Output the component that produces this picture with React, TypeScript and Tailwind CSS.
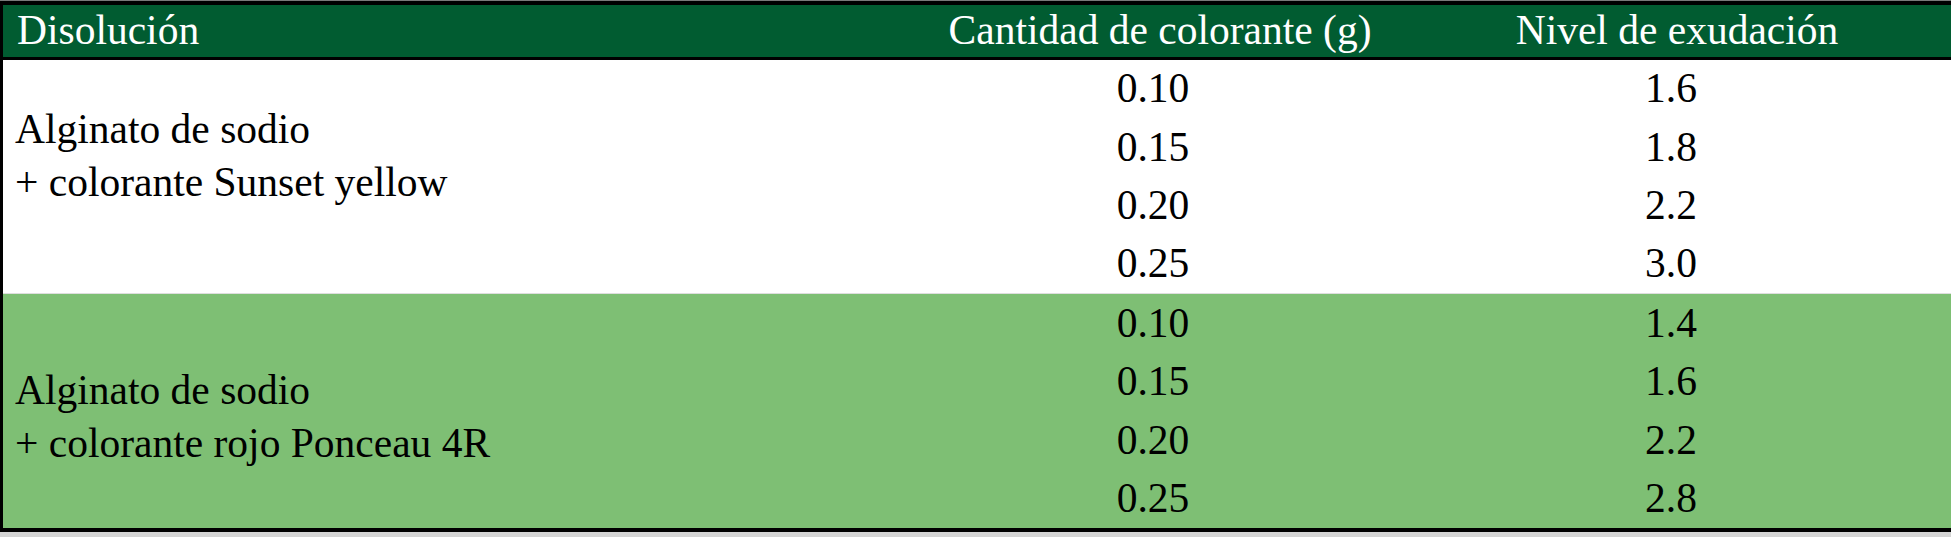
const rows1 = [
  ["0.10", "1.6"],
  ["0.15", "1.8"],
  ["0.20", "2.2"],
  ["0.25", "3.0"],
];

const rows2 = [
  ["0.10", "1.4"],
  ["0.15", "1.6"],
  ["0.20", "2.2"],
  ["0.25", "2.8"],
];

function Values({ rows, col }: { rows: string[][]; col: number }) {
  return (
    <div className="grid grid-rows-4">
      {rows.map((r, i) => (
        <div key={i} className="flex items-center justify-center">
          {r[col]}
        </div>
      ))}
    </div>
  );
}

export default function App() {
  return (
    <div className="w-[1951px] h-[537px] bg-[#d4d4d4] font-serif text-[41.5px] leading-none">
      <div className="h-px bg-[#7a7a7a]" />
      <div className="border-t-4 border-b-4 border-l-[3px] border-black font-[Liberation_Serif]">
        <div className="h-[55px] bg-[#015c31] text-white grid grid-cols-[912px_476px_1fr] border-b-[3px] border-black">
          <div className="flex items-center pl-[14px]">Disolución</div>
          <div className="flex items-center justify-center pl-[14px]">Cantidad de colorante (g)</div>
          <div className="flex items-center justify-center pl-[12px]">Nivel de exudación</div>
        </div>
        <div className="h-[233px] bg-white text-black grid grid-cols-[912px_476px_1fr]">
          <div className="flex flex-col justify-center pl-[12px] pb-[42px] leading-[53px]">
            <span>Alginato de sodio</span>
            <span>+ colorante Sunset yellow</span>
          </div>
          <Values rows={rows1} col={0} />
          <Values rows={rows1} col={1} />
        </div>
        <div className="h-px bg-[#dedede]" />
        <div className="h-[234px] bg-[#7ebf74] text-black grid grid-cols-[912px_476px_1fr]">
          <div className="flex flex-col justify-center pl-[12px] pt-[12px] leading-[53px]">
            <span>Alginato de sodio</span>
            <span>+ colorante rojo Ponceau 4R</span>
          </div>
          <Values rows={rows2} col={0} />
          <Values rows={rows2} col={1} />
        </div>
      </div>
    </div>
  );
}
